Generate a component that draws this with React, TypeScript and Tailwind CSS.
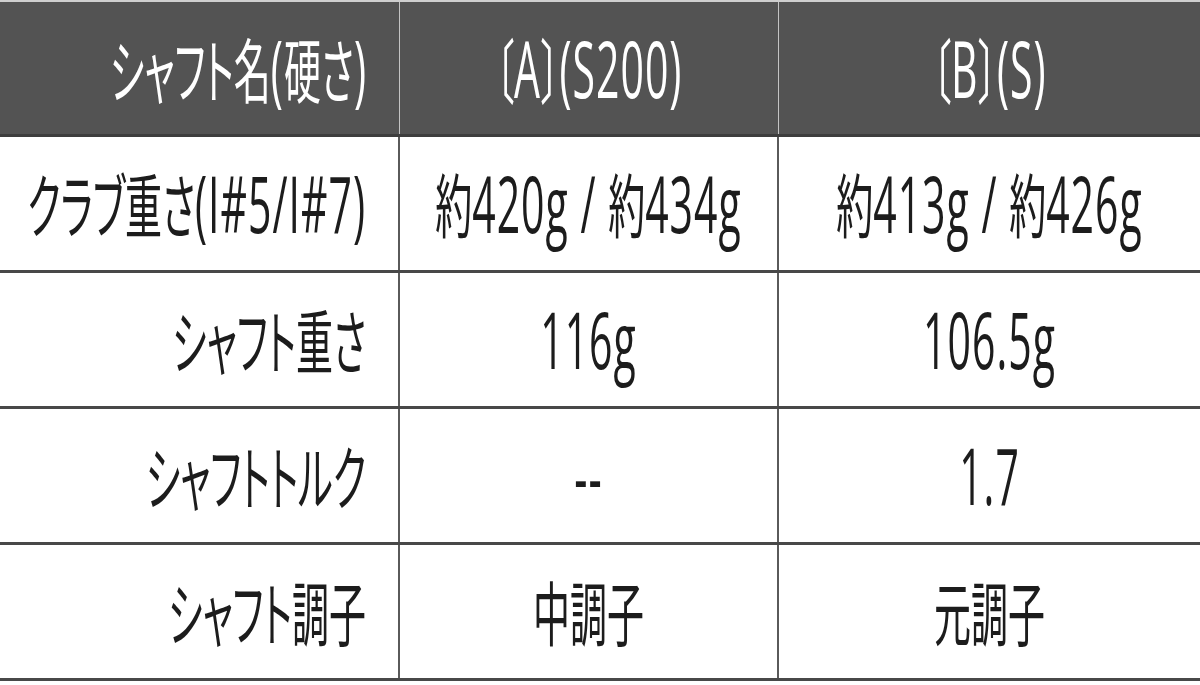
import React from 'react';

const rows: [string, string, string][] = [
  ['クラブ重さ(I#5/I#7)', '約420g / 約434g', '約413g / 約426g'],
  ['シャフト重さ', '116g', '106.5g'],
  ['シャフトトルク', '--', '1.7'],
  ['シャフト調子', '中調子', '元調子'],
];

// ASCII runs are set a little larger so digits sit as tall as the kanji
function Label({ text }: { text: string }) {
  const parts = text.split(/([\x20-\x7E]+)/).filter(Boolean);
  return (
    <span className="inline-block scale-y-[1.9] whitespace-pre leading-none [font-feature-settings:'palt']">
      {parts.map((p, i) =>
        /^[\x20-\x7E]+$/.test(p) ? (
          <span key={i} className="text-[41px] font-normal tracking-[1px] font-['Open_Sans','Noto_Sans_CJK_JP',sans-serif]">
            {p}
          </span>
        ) : (
          <span key={i} className="text-[37px] font-normal">
            {p}
          </span>
        )
      )}
    </span>
  );
}

export default function App() {
  return (
    <div className="w-[1200px] h-[685px] bg-white overflow-hidden font-['Noto_Sans_CJK_JP','Noto_Sans',sans-serif]">
      {/* Header */}
      <div className="grid grid-cols-[400px_379px_1fr] h-[137px] bg-[#535353] text-white border-t-2 border-t-[#cfcfcf] border-b-[3px] border-b-[#3d3d3d]">
        <div className="flex items-center justify-end pr-8 border-r border-r-[#c4c4c4]">
          <Label text="シャフト名(硬さ)" />
        </div>
        <div className="flex items-center justify-center border-r border-r-[#c4c4c4]">
          <Label text="〔A〕(S200)" />
        </div>
        <div className="flex items-center justify-center">
          <Label text="〔B〕(S)" />
        </div>
      </div>

      {rows.map(([name, a, b]) => (
        <div
          key={name}
          className="grid grid-cols-[400px_379px_1fr] h-[136px] text-[#1c1c1c] border-b-[3px] border-b-[#484848]"
        >
          <div className="flex items-center justify-end pr-8 border-r-2 border-r-[#5a5a5a]">
            <Label text={name} />
          </div>
          <div className="flex items-center justify-center border-r-2 border-r-[#5a5a5a]">
            <Label text={a} />
          </div>
          <div className="flex items-center justify-center">
            <Label text={b} />
          </div>
        </div>
      ))}
    </div>
  );
}
